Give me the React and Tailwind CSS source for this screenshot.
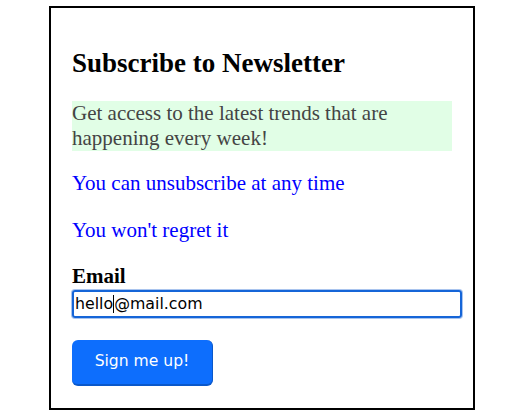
export default function App() {
  const serif = { fontFamily: '"Liberation Serif", "Times New Roman", serif' };
  return (
    <div className="w-[519px] h-[414px] bg-white overflow-hidden">
      <div className="ml-[49px] mt-[6px] w-[426px] h-[404px] border-2 border-black pl-[21px] pt-[39px]" style={serif}>
        <h2 className="text-[27px] leading-[32px] font-bold text-black m-0">Subscribe to Newsletter</h2>
        <p className="mt-[22px] w-[380px] bg-[#e1fee6] text-[#444444] text-[21px] leading-[25px]">
          Get access to the latest trends that are happening every week!
        </p>
        <p className="mt-[20px] text-[21px] leading-[25px] text-[#0000ff]">You can unsubscribe at any time</p>
        <p className="mt-[22px] text-[21px] leading-[25px] text-[#0000ff]">You won't regret it</p>
        <div className="mt-[21px] text-[21px] leading-[25px] font-bold text-black">Email</div>
        <div
          className="mt-[1px] w-[390px] h-[28px] border-2 border-[#1565d8] rounded-[3px] ring-1 ring-[#a9c4ee] flex items-center pl-[1px] text-[15.8px] text-black"
          style={{ fontFamily: '"DejaVu Sans", Verdana, sans-serif' }}
        >
          <span>hello</span>
          <span className="inline-block w-px h-[18px] bg-black" />
          <span>@mail.com</span>
        </div>
        <div
          className="mt-[22px] w-[141px] h-[46px] rounded-[6px] bg-[#0d6efd] border-b-2 border-r border-[#0a58ca] flex items-center justify-center text-white text-[15.6px]"
          style={{ fontFamily: '"DejaVu Sans", Verdana, sans-serif' }}
        >
          Sign me up!
        </div>
      </div>
    </div>
  );
}
